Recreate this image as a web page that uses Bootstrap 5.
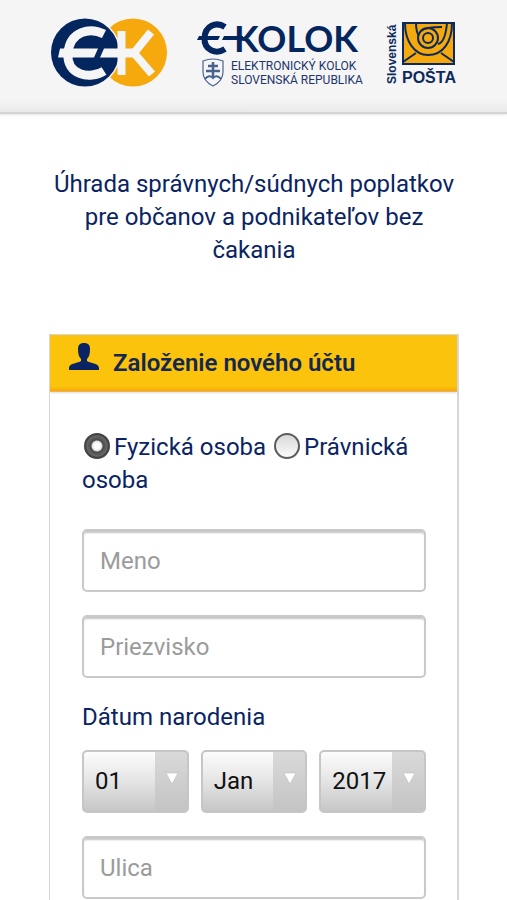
<!DOCTYPE html>
<html lang="sk">
<head>
<meta charset="utf-8">
<meta name="viewport" content="width=device-width, initial-scale=1">
<title>E-KOLOK – Založenie nového účtu</title>
<link href="https://cdn.jsdelivr.net/npm/bootstrap@5.3.0/dist/css/bootstrap.min.css" rel="stylesheet">
<style>
  :root { --navy: #0a2463; --gold: #fbc30c; --line: #d6d6d8; }
  body { font-family: Roboto, "Liberation Sans", sans-serif; font-size: 24px; line-height: 33px; color: var(--navy); background: #fff; }
  .site-header { background: linear-gradient(#f5f5f5 88%, #eaeaea); border-bottom: 2px solid #d4d4d4; padding: 18px 50px 24px; box-shadow: 0 1px 2px #e4e4e4; }
  .page-body { padding: 54px 48px 0 49px; }
  .intro { margin-bottom: 67px; }
  .account-card { --bs-card-border-radius: 0; border: 1px solid var(--line); border-width: 1px 2px 0 1px; color: var(--navy); --bs-card-bg: #fff; }
  .account-head { background: linear-gradient(var(--gold) 92%, #fba50a); height: 57px; padding: 0 18px; border-bottom: 1px solid #e9b65a; box-shadow: 0 1px 2px #ddd; gap: 13px; }
  .account-head h1 { font-size: 24px; line-height: 33px; font-weight: 600; color: #14284f; }
  .account-head svg { margin-bottom: 12px; }
  .account-form { padding: 39px 31px 3px 32px; }
  .person-kind { margin-bottom: 32px; }
  .kind-radio { appearance: none; width: 26px; height: 26px; margin: 0 4px 0 2px; border: 2px solid #5c5c5c; border-radius: 50%; background: linear-gradient(#d9d9d9, #fafafa); vertical-align: -4px; }
  .kind-radio:checked { border-color: #444; background: radial-gradient(circle, #fff 0 3px, #d8d8d8 5px, #4a4a4a 6px, #666 10px, #444 12px); }
  .field { height: 63px; margin-bottom: 23px; padding: 0 16px; font-size: 24px; line-height: 33px; border: 2px solid #c9c9c9; border-radius: 5px; box-shadow: inset 0 3px 2px -1px #c4c4c4; }
  .field::placeholder { color: #9b9b9b; opacity: 1; }
  .field:last-child { margin-bottom: 0; }
  .birth legend { font-size: 24px; line-height: 33px; margin-bottom: 16px; }
  .birth { margin-bottom: 23px; }
  .birth-parts { gap: 12px; }
  .pick { height: 63px; width: 100%; padding: 0 0 0 11px; appearance: none; color: #111; border: 2px solid #c6c6c6; border-radius: 5px;
    background:
      url("data:image/svg+xml,%3Csvg xmlns='http://www.w3.org/2000/svg' width='12' height='12'%3E%3Cpath d='M0 1H12L6 12Z' fill='white' stroke='%23b5b5b5' stroke-width='.5'/%3E%3C/svg%3E") right 9px top 20px / 12px 12px no-repeat,
      linear-gradient(#d9d9d9, #c4c4c4) right / 32px 100% no-repeat,
      linear-gradient(#fcfcfc, #e4e4e4 50%, #c6c6c6); }
</style>
<script src="https://cdn.jsdelivr.net/npm/bootstrap@5.3.0/dist/js/bootstrap.bundle.min.js"></script>
</head>
<body class="d-flex flex-column min-vh-100">
<header class="site-header d-flex justify-content-between align-items-start">
  <svg width="118" height="70" viewBox="0 0 118 70" role="img" aria-label="EK">
    <circle cx="83" cy="34.500" r="34" fill="#f5a90c"/>
    <circle cx="35" cy="34.500" r="35.500" fill="#f5f5f5"/>
    <circle cx="35" cy="34.500" r="34" fill="#04265f"/>
    <g fill="none" stroke="#f5f5f5">
      <path d="M54 16C40 9 20 13 18 35S40 62 54 53" stroke-width="9"/>
      <path d="M10 30.500H48L44 39.500H8Z M54 30.500H86V39.500H50Z" fill="#f5f5f5" stroke="none"/>
      <path d="M71.500 13V57" stroke-width="8"/>
      <path d="M101 14L84 35L102 56" stroke-width="8"/>
    </g>
  </svg>
  <svg width="172" height="70" viewBox="-4 0 172 70" role="img" aria-label="E-KOLOK Elektronický kolok Slovenská republika">
    <g fill="none" stroke="#04265f">
      <path d="M30 9C21 3 10 8 9.500 20S21 37 30 31" stroke-width="6"/>
      <path d="M4 18H25L23 22H2Z M29 18H48V22H27Z" fill="#04265f" stroke="none"/>
      <g stroke-width="1.200" stroke="#4a6290">
        <path d="M8 43Q18 39 28 43V54C28 62 22 66 18 68C14 66 8 62 8 54Z"/>
        <path d="M18 44V60M13 48H23M11 53H25" stroke-width="2.500"/>
        <path d="M10 61Q14 56 18 60Q22 56 26 61" stroke-width="2"/>
      </g>
    </g>
    <g fill="#04265f">
      <text x="39" y="34" font-family="Lato, sans-serif" font-weight="700" font-size="36">KOLOK</text>
      <g font-family="Roboto, sans-serif" font-size="12" fill="#1c366d">
        <text x="36" y="52">ELEKTRONICKÝ KOLOK</text>
        <text x="36" y="66">SLOVENSKÁ REPUBLIKA</text>
      </g>
    </g>
  </svg>
  <svg width="72" height="70" viewBox="0 0 72 70" role="img" aria-label="Slovenská pošta">
    <rect x="18" y="5" width="51" height="41" fill="#f5a90c" stroke="#0d2a5c" stroke-width="2"/>
    <g fill="none" stroke="#0d2a5c" stroke-width="2">
      <path d="M18 44L31 35M69 44L56 35"/>
      <path d="M20 5C20 24 30 37 43 37C58 37 67 24 67 5"/>
      <path d="M31 5C31 12 32 15 34 18M62 5C61 16 58 25 53 26"/>
      <circle cx="43" cy="20" r="10"/>
      <circle cx="43" cy="20" r="5"/>
      <path d="M36 13C39 10 46 9 57 9"/>
    </g>
    <g fill="#0d2a5c" font-family="Liberation Sans, sans-serif" font-weight="700">
      <text x="17" y="65" font-size="16">POŠTA</text>
      <text transform="translate(11 66) rotate(-90)" font-size="12">Slovenská</text>
    </g>
  </svg>
</header>

<main class="page-body d-flex flex-column flex-grow-1">
  <p class="intro text-center">Úhrada správnych/súdnych poplatkov pre občanov a podnikateľov bez čakania</p>

  <section class="card account-card flex-grow-1">
    <div class="account-head d-flex align-items-center">
      <svg width="32" height="28" viewBox="0 0 32 28" aria-hidden="true">
        <path fill="#0a2463" d="M16 0C20 0 22 2 22 6C22 11 21 14 19 16V18C21 20 31 20 31 25V27H1V25C1 20 11 20 13 18V16C11 14 10 11 10 6C10 2 12 0 16 0Z"/>
      </svg>
      <h1 class="mb-0">Založenie nového účtu</h1>
    </div>
    <form class="account-form">
      <div class="person-kind">
        <input class="kind-radio" type="radio" name="kind" id="kind-person" checked><label class="d-inline" for="kind-person">Fyzická osoba</label>
        <input class="kind-radio" type="radio" name="kind" id="kind-company"><label class="d-inline" for="kind-company">Právnická osoba</label>
      </div>
      <input class="form-control field" type="text" placeholder="Meno" aria-label="Meno">
      <input class="form-control field" type="text" placeholder="Priezvisko" aria-label="Priezvisko">
      <fieldset class="birth">
        <legend>Dátum narodenia</legend>
        <div class="birth-parts d-flex">
          <select class="pick" aria-label="Deň"><option>01</option></select>
          <select class="pick" aria-label="Mesiac"><option>Jan</option></select>
          <select class="pick" aria-label="Rok"><option>2017</option></select>
        </div>
      </fieldset>
      <input class="form-control field" type="text" placeholder="Ulica" aria-label="Ulica">
    </form>
  </section>
</main>
</body>
</html>
